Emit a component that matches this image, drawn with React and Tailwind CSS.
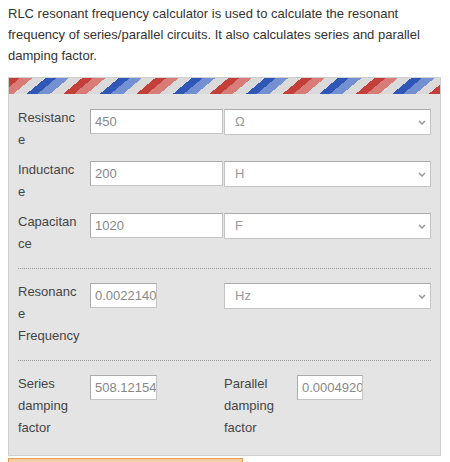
const Field = ({ value, className }) => (
  <input
    readOnly
    value={value}
    className={`h-[25px] mt-[2px] bg-white border border-[#c4c4c4] border-t-[#aaa] border-l-[#aaa] pl-[4px] text-[13px] text-[#888] outline-none ${className}`}
  />
);

const Unit = ({ label }) => (
  <div className="col-span-2 h-[26px] mt-[2px] flex items-center justify-between bg-white border border-[#c4c4c4] border-t-[#aaa] pl-[10px] pr-[4px] text-[13px] text-[#999]">
    <span>{label}</span>
    <svg width="8" height="5" viewBox="0 0 8 5" fill="none">
      <path d="M1 1l3 3 3-3" stroke="#999" strokeWidth="1.5" />
    </svg>
  </div>
);

const Label = ({ children }) => (
  <div className="w-[63px] break-words text-[13px] leading-[22px] text-[#444]">{children}</div>
);

const Separator = () => <div className="mt-[13px] mb-[12px] border-t border-dotted border-[#999]" />;

const App = () => {
  return (
    <div className="w-[450px] px-2 font-['Liberation_Sans',Arial,sans-serif]">
      <p className="pt-[3px] text-[13px] leading-[21px] text-[#333]">
        RLC resonant frequency calculator is used to calculate the resonant frequency of
        series/parallel circuits. It also calculates series and parallel damping factor.
      </p>

      <div className="mt-[11px] w-[433px] border border-[#cfcfcf] bg-[#e4e4e4]">
        {/* airmail stripe */}
        <div className="h-4 bg-[repeating-linear-gradient(140deg,#c23f3a_0px,#c23f3a_7px,#d97b77_7px,#d97b77_15px,#dadada_15px,#dadada_23.5px,#3157b6_23.5px,#3157b6_30.5px,#7391d2_30.5px,#7391d2_38.5px,#dadada_38.5px,#dadada_47px)]" />

        <div className="px-[9px] pt-[13px] pb-[16px]">
          <div className="grid grid-cols-[72px_134px_73px_1fr] gap-y-2 items-start">
            <Label>Resistance</Label>
            <Field value="450" className="w-[133px]" />
            <Unit label="Ω" />

            <Label>Inductance</Label>
            <Field value="200" className="w-[133px]" />
            <Unit label="H" />

            <Label>Capacitance</Label>
            <Field value="1020" className="w-[133px]" />
            <Unit label="F" />
          </div>

          <Separator />

          <div className="grid grid-cols-[72px_134px_73px_1fr] items-start">
            <Label>Resonance Frequency</Label>
            <Field value="0.002214097" className="w-[67px]" />
            <Unit label="Hz" />
          </div>

          <Separator />

          <div className="grid grid-cols-[72px_134px_73px_1fr] items-start">
            <Label>Series damping factor</Label>
            <Field value="508.121546" className="w-[67px]" />
            <Label>Parallel damping factor</Label>
            <Field value="0.000492052" className="w-[66px]" />
          </div>
        </div>
      </div>

      <div className="mt-[2px] w-[235px] h-10 border border-[#e39b55] bg-[#f7cda2]" />
    </div>
  );
};

export default App;
